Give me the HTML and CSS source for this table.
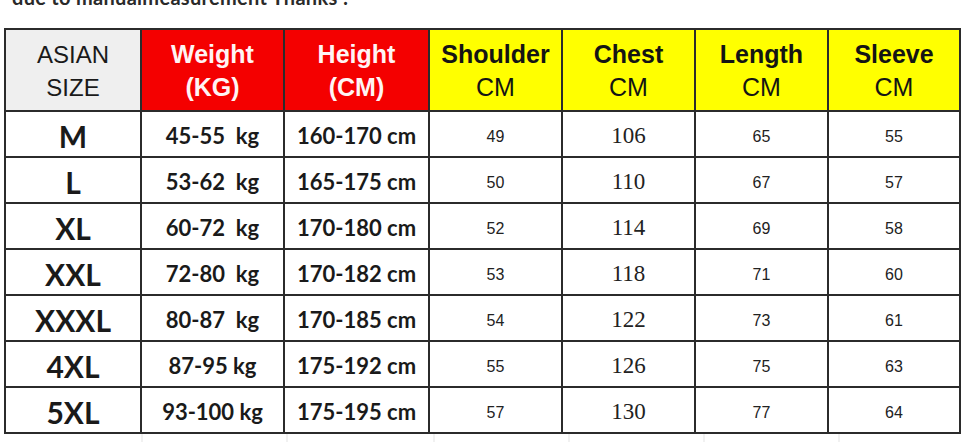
FILE: index.html
```html
<!DOCTYPE html>
<html>
<head>
<meta charset="utf-8">
<link rel="stylesheet" href="styles.css">
</head>
<body>
<div class="note"><p>due to manualmeasurement Thanks !</p></div>
<table class="chart">
  <colgroup>
    <col class="c1"><col class="c2"><col class="c3"><col class="c4"><col class="c5"><col class="c6"><col class="c7">
  </colgroup>
  <thead>
    <tr>
      <th class="gray">ASIAN<br>SIZE</th>
      <th class="red">Weight<br>(KG)</th>
      <th class="red">Height<br>(CM)</th>
      <th class="yellow"><b>Shoulder</b><br>CM</th>
      <th class="yellow"><b>Chest</b><br>CM</th>
      <th class="yellow"><b>Length</b><br>CM</th>
      <th class="yellow"><b>Sleeve</b><br>CM</th>
    </tr>
  </thead>
  <tbody>
    <tr><td class="size">M</td><td class="wh">45-55&nbsp; kg</td><td class="wh">160-170 cm</td><td class="num">49</td><td class="chest">106</td><td class="num">65</td><td class="num">55</td></tr>
    <tr><td class="size">L</td><td class="wh">53-62&nbsp; kg</td><td class="wh">165-175 cm</td><td class="num">50</td><td class="chest">110</td><td class="num">67</td><td class="num">57</td></tr>
    <tr><td class="size">XL</td><td class="wh">60-72&nbsp; kg</td><td class="wh">170-180 cm</td><td class="num">52</td><td class="chest">114</td><td class="num">69</td><td class="num">58</td></tr>
    <tr><td class="size">XXL</td><td class="wh">72-80&nbsp; kg</td><td class="wh">170-182 cm</td><td class="num">53</td><td class="chest">118</td><td class="num">71</td><td class="num">60</td></tr>
    <tr><td class="size">XXXL</td><td class="wh">80-87&nbsp; kg</td><td class="wh">170-185 cm</td><td class="num">54</td><td class="chest">122</td><td class="num">73</td><td class="num">61</td></tr>
    <tr><td class="size">4XL</td><td class="wh">87-95 kg</td><td class="wh">175-192 cm</td><td class="num">55</td><td class="chest">126</td><td class="num">75</td><td class="num">63</td></tr>
    <tr><td class="size">5XL</td><td class="wh">93-100 kg</td><td class="wh">175-195 cm</td><td class="num">57</td><td class="chest">130</td><td class="num">77</td><td class="num">64</td></tr>
  </tbody>
</table>
<div class="ghost">
  <span class="g1"></span><span class="g2"></span><span class="g3"></span><span class="g4"></span><span class="g5"></span><span class="g6"></span><span class="g7"></span>
</div>
</body>
</html>
```

FILE: styles.css
```css
html, body {
  margin: 0;
  padding: 0;
  background: #ffffff;
  width: 966px;
  height: 442px;
  overflow: hidden;
}

.note {
  height: 28px;
  overflow: hidden;
  padding-left: 12px;
}

.note p {
  margin: -14px 0 0 0;
  font-family: Lato, "Liberation Sans", sans-serif;
  font-weight: 700;
  font-size: 20px;
  line-height: 22px;
  color: #2a2a2a;
  letter-spacing: 0.3px;
}

.chart {
  margin-left: 4px;
  border-collapse: collapse;
  table-layout: fixed;
  width: 955px;
  border: 2px solid #2b2b2b;
}

.c1 { width: 136px; }
.c2 { width: 143px; }
.c3 { width: 145px; }
.c4 { width: 133px; }
.c5 { width: 133px; }
.c6 { width: 133px; }
.c7 { width: 132px; }

.chart th, .chart td {
  border: 2px solid #2b2b2b;
  padding: 0;
  text-align: center;
  vertical-align: middle;
}

.chart thead tr { height: 82px; }
.chart tbody tr { height: 46px; }

.chart th {
  font-family: "Liberation Sans", Arial, sans-serif;
  font-size: 25px;
  line-height: 33px;
  font-weight: 400;
  color: #111;
  padding-top: 2px;
}

.chart th.gray {
  background: #efefef;
  font-size: 24px;
  color: #1a1a1a;
}

.chart th.red {
  background: #f40000;
  color: #fff4f4;
  font-weight: 700;
  font-size: 25px;
}

.chart th.yellow {
  background: #ffff00;
  color: #141414;
}

.chart th.yellow b {
  font-weight: 700;
}

.size {
  font-family: Lato, "Open Sans", sans-serif;
  font-weight: 700;
  font-size: 30px;
  color: #1a1a1a;
  padding-top: 4px !important;
}

.wh {
  font-family: Lato, "Open Sans", sans-serif;
  font-weight: 700;
  font-size: 22px;
  color: #1a1a1a;
  white-space: nowrap;
  padding-top: 2px !important;
}

.num {
  font-family: "Liberation Sans", Arial, sans-serif;
  font-size: 16px;
  color: #222;
  padding-top: 5px !important;
}

.chest {
  font-family: "Liberation Serif", "Times New Roman", serif;
  font-size: 23px;
  color: #222;
  padding-top: 4px !important;
}

.ghost {
  display: flex;
  margin-left: 5px;
  height: 12px;
}

.ghost span {
  display: block;
  height: 12px;
  border-right: 2px solid #f1f1f1;
}

.g1 { width: 136px; }
.g2 { width: 143px; }
.g3 { width: 145px; }
.g4 { width: 133px; }
.g5 { width: 133px; }
.g6 { width: 133px; }
.g7 { width: 0; border-right: none !important; }
```
